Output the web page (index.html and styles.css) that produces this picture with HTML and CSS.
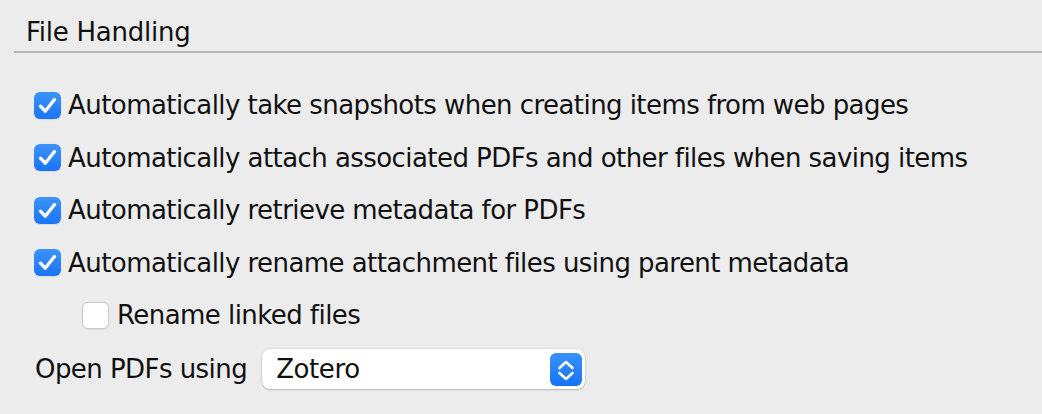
FILE: index.html
```html
<!DOCTYPE html>
<html>
<head>
<meta charset="utf-8">
<link rel="stylesheet" href="styles.css">
</head>
<body>
<div class="pane">
  <div class="header"><span class="title">File Handling</span></div>
  <div class="options">
    <div class="row">
      <span class="cb checked"><svg viewBox="0 0 27 27" width="27" height="27"><path d="M6.5 14.2 L11.2 19.2 L20.5 7.5" fill="none" stroke="#fff" stroke-width="3.4" stroke-linecap="round" stroke-linejoin="round"/></svg></span>
      <span class="label">Automatically take snapshots when creating items from web pages</span>
    </div>
    <div class="row">
      <span class="cb checked"><svg viewBox="0 0 27 27" width="27" height="27"><path d="M6.5 14.2 L11.2 19.2 L20.5 7.5" fill="none" stroke="#fff" stroke-width="3.4" stroke-linecap="round" stroke-linejoin="round"/></svg></span>
      <span class="label">Automatically attach associated PDFs and other files when saving items</span>
    </div>
    <div class="row">
      <span class="cb checked"><svg viewBox="0 0 27 27" width="27" height="27"><path d="M6.5 14.2 L11.2 19.2 L20.5 7.5" fill="none" stroke="#fff" stroke-width="3.4" stroke-linecap="round" stroke-linejoin="round"/></svg></span>
      <span class="label">Automatically retrieve metadata for PDFs</span>
    </div>
    <div class="row">
      <span class="cb checked"><svg viewBox="0 0 27 27" width="27" height="27"><path d="M6.5 14.2 L11.2 19.2 L20.5 7.5" fill="none" stroke="#fff" stroke-width="3.4" stroke-linecap="round" stroke-linejoin="round"/></svg></span>
      <span class="label">Automatically rename attachment files using parent metadata</span>
    </div>
    <div class="row sub">
      <span class="cb"></span>
      <span class="label">Rename linked files</span>
    </div>
    <div class="row popup-row">
      <span class="plabel">Open PDFs using</span>
      <div class="popup">
        <span class="pvalue">Zotero</span>
        <span class="stepper"><svg viewBox="0 0 32 33" width="32" height="33"><path d="M9.5 15 L16 9 L22.5 15" fill="none" stroke="#fff" stroke-width="2.6" stroke-linecap="round" stroke-linejoin="round"/><path d="M9.5 20 L16 26 L22.5 20" fill="none" stroke="#fff" stroke-width="2.6" stroke-linecap="round" stroke-linejoin="round"/></svg></span>
      </div>
    </div>
  </div>
</div>
</body>
</html>
```

FILE: styles.css
```css
html, body {
  margin: 0;
  padding: 0;
  background: #ececec;
}
body {
  width: 1042px;
  height: 414px;
  overflow: hidden;
  font-family: "DejaVu Sans", "Liberation Sans", sans-serif;
  font-size: 26px;
  color: #111;
}
.pane {
  padding-top: 14px;
}
.header {
  margin-left: 14px;
  border-bottom: 2px solid #b5b5b5;
  height: 37px;
  box-sizing: content-box;
}
.title {
  display: block;
  padding-left: 12px;
  line-height: 37px;
  letter-spacing: -0.25px;
}
.options {
  padding-top: 26px;
}
.row {
  display: flex;
  align-items: center;
  height: 52.5px;
  padding-left: 34px;
}
.row.sub {
  padding-left: 82px;
}
.cb {
  width: 27px;
  height: 27px;
  box-sizing: border-box;
  border-radius: 6px;
  background: #fff;
  border: 1px solid #c9c9c9;
  box-shadow: 0 0.5px 1px rgba(0,0,0,0.08);
  flex: none;
  display: block;
}
.cb.checked {
  border: none;
  background: linear-gradient(#3d93fb, #1a74f5);
}
.cb svg {
  display: block;
}
.label {
  margin-left: 7px;
  white-space: nowrap;
  letter-spacing: -0.56px;
}
.sub .label {
  margin-left: 8px;
}
.popup-row {
  height: 55px;
  padding-left: 35px;
}
.plabel {
  letter-spacing: -0.55px;
  white-space: nowrap;
}
.popup {
  margin-left: 15px;
  width: 323px;
  height: 40px;
  box-sizing: border-box;
  background: #fff;
  border-radius: 8px;
  box-shadow: 0 0 0 0.5px rgba(0,0,0,0.12), 0 1px 2px rgba(0,0,0,0.18);
  display: flex;
  align-items: center;
  justify-content: space-between;
  padding-left: 14px;
  padding-right: 3px;
}
.pvalue {
  letter-spacing: -0.4px;
}
.stepper {
  width: 32px;
  height: 33px;
  border-radius: 6px;
  background: linear-gradient(#3a90fb, #1673f5);
  display: block;
}
.stepper svg {
  display: block;
}
```
